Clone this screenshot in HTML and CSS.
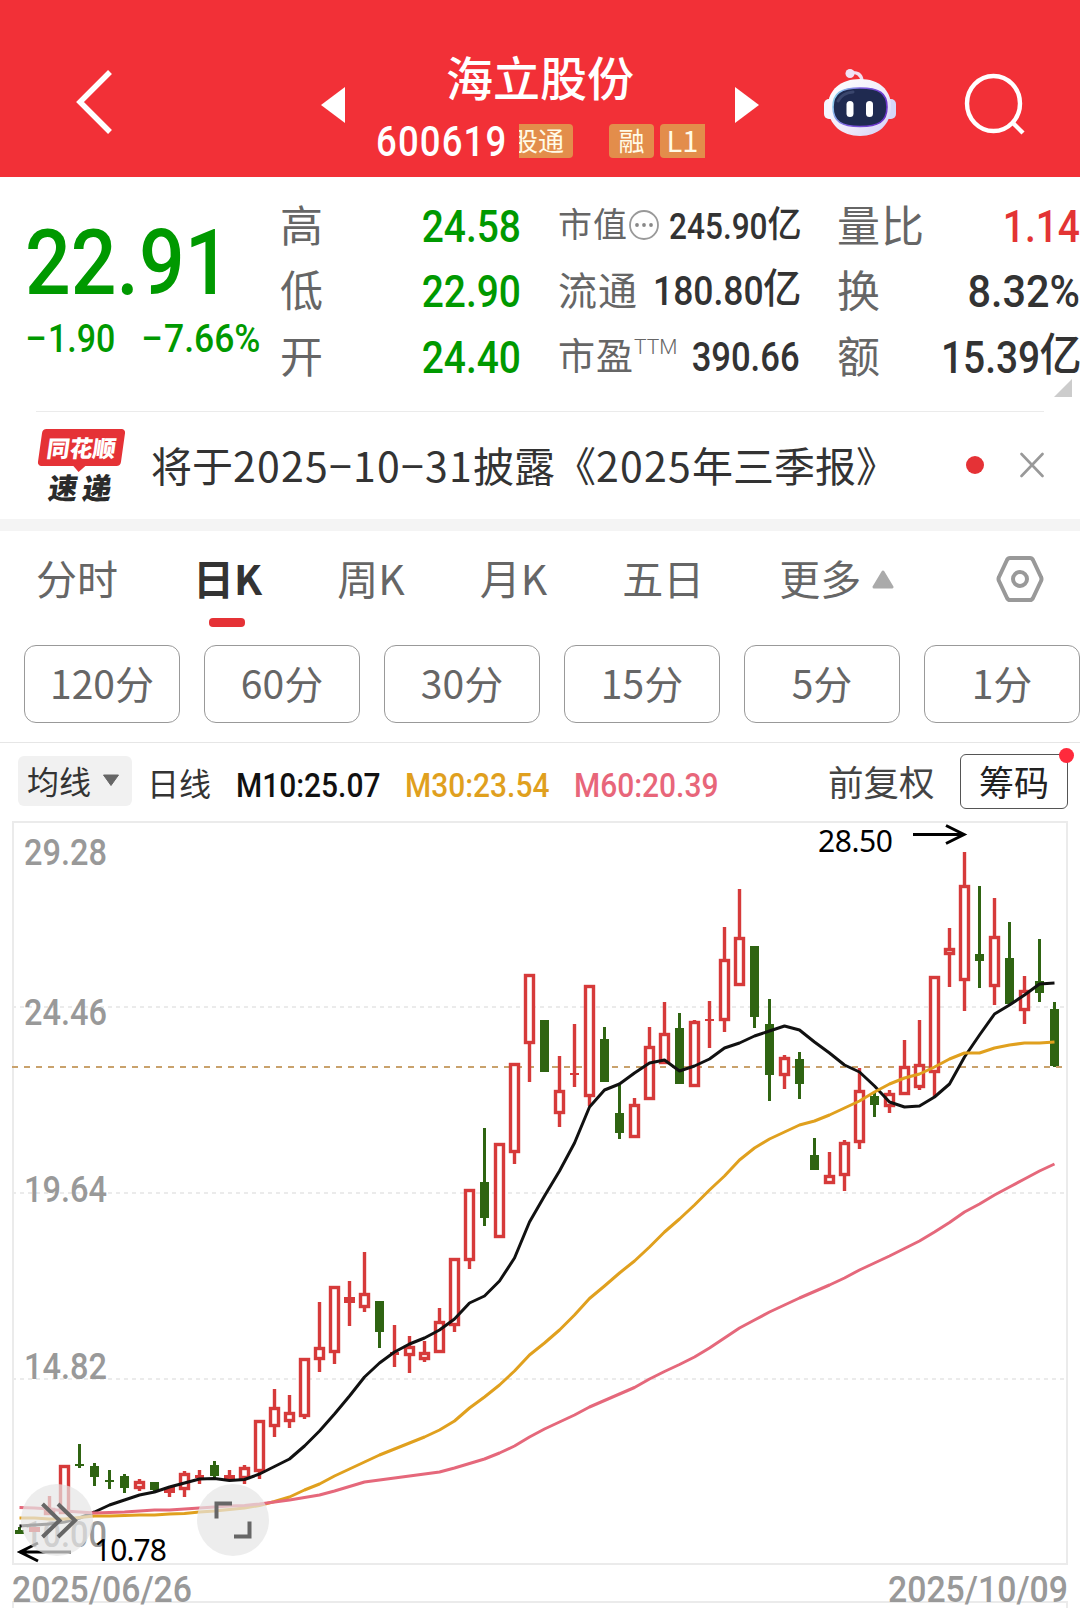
FILE: index.html
```html
<!DOCTYPE html>
<html lang="zh-CN">
<head>
  <meta charset="UTF-8" />
  <title>海立股份 600619</title>
  <meta name="viewport" content="width=device-width, initial-scale=1" />
  <link rel="stylesheet" href="styles.css">
</head>
<body>

  <header class="header">
    <svg class="back" width="40" height="68" viewBox="0 0 40 68"><path d="M35 4 L5 34 L35 64" fill="none" stroke="#fff" stroke-width="5.5" /></svg>
    <svg class="prev" width="24" height="36" viewBox="0 0 24 36"><path d="M24 0 V36 L0 18 Z" fill="#fff" /></svg>
    <div class="stock">
      <h1>海立股份</h1>
      <div class="stock-sub">
        <span class="code">600619</span>
        <span class="tag tag-cut"><span>股通</span></span>
        <span class="tag">融</span>
        <span class="tag tag-last">L1</span>
      </div>
    </div>
    <svg class="next" width="24" height="36" viewBox="0 0 24 36"><path d="M0 0 V36 L24 18 Z" fill="#fff" /></svg>
    <svg class="robot" width="74" height="70" viewBox="0 0 74 70">
      <defs>
        <linearGradient id="shell" x1="0" y1="0" x2="1" y2="1">
          <stop offset="0" stop-color="#ffffff" />
          <stop offset="0.6" stop-color="#f0eafa" />
          <stop offset="1" stop-color="#cfcdf6" />
        </linearGradient>
        <linearGradient id="rim" x1="0" y1="0" x2="1" y2="0.3">
          <stop offset="0" stop-color="#8fe6ee" />
          <stop offset="0.5" stop-color="#7f5ce0" />
          <stop offset="1" stop-color="#6a35c8" />
        </linearGradient>
      </defs>
      <path d="M27 5 Q38 3 39 13" fill="none" stroke="#f3dff0" stroke-width="3.4" />
      <circle cx="27" cy="5.500" r="4.500" fill="#f1e2f6" />
      <rect x="1" y="31" width="12" height="20" rx="5" fill="#f4f6ff" />
      <rect x="61" y="31" width="12" height="20" rx="5" fill="#d6d6f8" />
      <path d="M37 11 C56 11 68 22 68 38 C68 57 55 68 37 68 C19 68 5 57 5 38 C5 22 18 11 37 11 Z" fill="url(#shell)" />
      <path d="M37 20 C56 20 64 25 64 39 C64 54 55 58.500 37 58.500 C19 58.500 10 54 10 39 C10 25 18 20 37 20 Z" fill="#1f2a50" stroke="url(#rim)" stroke-width="1.600" />
      <path d="M15 33 Q19 25 30 24" fill="none" stroke="#55618a" stroke-width="3" stroke-linecap="round" opacity="0.5" />
      <rect x="23.500" y="33" width="7" height="16" rx="3.500" fill="#fff" />
      <rect x="43" y="33" width="7" height="16" rx="3.500" fill="#fff" />
    </svg>
    <svg class="search" width="64" height="64" viewBox="0 0 64 64" fill="none" stroke="#fff" stroke-width="4.400">
      <ellipse cx="30.500" cy="31.500" rx="26.500" ry="27.500" /><path d="M49 50 L60 61" />
    </svg>
  </header>

  <section class="quote">
    <div class="price-box">
      <div class="price">22.91</div>
      <div class="change"><span class="minus">−</span><span class="chg-a">1.90</span><span class="minus second">−</span><span class="chg-b">7.66%</span></div>
    </div>
    <div class="col col-a">
      <div class="row"><span>高</span><b class="green">24.58</b></div>
      <div class="row"><span>低</span><b class="green">22.90</b></div>
      <div class="row"><span>开</span><b class="green">24.40</b></div>
    </div>
    <div class="col col-b">
      <div class="row s1"><span>市值</span>
        <svg class="more-info" width="32" height="32" viewBox="0 0 32 32"><circle cx="16" cy="16" r="14" fill="none" stroke="#999" stroke-width="1.800" /><circle cx="9" cy="16" r="1.900" fill="#888" /><circle cx="16" cy="16" r="1.900" fill="#888" /><circle cx="23" cy="16" r="1.900" fill="#888" /></svg>
        <b>245.90<i>亿</i></b></div>
      <div class="row s2"><span>流通</span><b>180.80<i>亿</i></b></div>
      <div class="row s3"><span>市盈</span><span class="ttm">TTM</span><b>390.66</b></div>
    </div>
    <div class="col col-c">
      <div class="row"><span>量比</span><b class="red">1.14</b></div>
      <div class="row"><span>换</span><b class="wide">8.32%</b></div>
      <div class="row"><span>额</span><b>15.39<i>亿</i></b></div>
    </div>
    <div class="corner"></div>
  </section>

  <section class="notice">
    <div class="express">
      <div class="express-top"><span>同花顺</span></div>
      <div class="express-bottom">速递</div>
    </div>
    <p>将于<span class="date">2025−10−31</span>披露《<span class="date">2025</span>年三季报》</p>
    <span class="dot"></span>
    <svg class="close" width="24" height="26" viewBox="0 0 24 26"><path d="M1.500 2 L22.500 24 M22.500 2 L1.500 24" stroke="#999" stroke-width="2.600" stroke-linecap="round" /></svg>
  </section>

  <nav class="tabs">
    <a>分时</a>
    <a class="active">日K</a>
    <a>周K</a>
    <a>月K</a>
    <a>五日</a>
    <a>更多</a>
    <svg class="up" width="22" height="19" viewBox="0 0 22 19"><path d="M11 2 L20 17 H2 Z" fill="#aaa" stroke="#aaa" stroke-width="3" stroke-linejoin="round" /></svg>
    <svg class="setting" width="50" height="50" viewBox="0 0 50 50" fill="none" stroke="#999" stroke-linejoin="round">
      <path d="M15 4 H35 Q37 4 38 6 L46 23 Q47 25 46 27 L38 44 Q37 46 35 46 H15 Q13 46 12 44 L4 27 Q3 25 4 23 L12 6 Q13 4 15 4 Z" stroke-width="4" />
      <circle cx="25" cy="25" r="7" stroke-width="4" />
    </svg>
  </nav>

  <div class="periods">
    <button>120分</button>
    <button>60分</button>
    <button>30分</button>
    <button>15分</button>
    <button>5分</button>
    <button>1分</button>
  </div>

  <div class="indicators">
    <div class="ma-select">均线<svg width="18" height="13" viewBox="0 0 18 13"><path d="M1.500 1 H16.500 L9 11.500 Z" fill="#666" stroke="#666" stroke-linejoin="round" /></svg></div>
    <span class="line-name">日线</span>
    <span class="ma m10">M10:25.07</span>
    <span class="ma m30">M30:23.54</span>
    <span class="ma m60">M60:20.39</span>
    <span class="adjust">前复权</span>
    <div class="chips">筹码</div>
  </div>

  <svg class="chart" width="1080" height="795" viewBox="0 813 1080 795">
    <g fill="none" stroke="#ebebeb" stroke-width="2">
      <rect x="13" y="822" width="1054" height="742" />
      <path d="M13 1608 V1602 H1067 V1608" />
      <path d="M12 1007 H1067 M12 1193 H1067 M12 1379 H1067" stroke-dasharray="4 4" />
    </g>
    <path d="M12 1067 H1062" stroke="#c9a26c" stroke-width="1.800" stroke-dasharray="6 6" />
    <g class="axis">
      <text x="24" y="864.500" textLength="83" lengthAdjust="spacingAndGlyphs">29.28</text>
      <text x="24" y="1024.500" textLength="83" lengthAdjust="spacingAndGlyphs">24.46</text>
      <text x="24" y="1201.500" textLength="83" lengthAdjust="spacingAndGlyphs">19.64</text>
      <text x="24" y="1378.500" textLength="83" lengthAdjust="spacingAndGlyphs">14.82</text>
      <text x="24" y="1547" textLength="83" lengthAdjust="spacingAndGlyphs">10.00</text>
      <text x="12" y="1602" textLength="180" lengthAdjust="spacingAndGlyphs">2025/06/26</text>
      <text x="888" y="1602" textLength="180" lengthAdjust="spacingAndGlyphs">2025/10/09</text>
    </g>
    <g id="candles"></g>
    <g id="lines"></g>
    <g class="extreme">
      <text x="818" y="852" textLength="75">28.50</text>
      <text x="94" y="1560.500" textLength="73">10.78</text>
      <path d="M913 834.500 H964 M946 825.500 L964 834.500 L946 843.500" />
      <path d="M71 1552 H20 M38 1543 L20 1552 L38 1561" />
    </g>
    <g class="float-btn">
      <circle cx="57" cy="1520" r="36" />
      <path d="M42.500 1504 L59.500 1520.500 L42.500 1537 M58 1504 L75 1520.500 L58 1537" />
      <circle cx="233" cy="1520" r="36" />
      <path d="M216.500 1518.500 V1503.500 H232 M249.500 1521.500 V1536.500 H234" />
    </g>
  </svg>

  <script src="chart.js"></script>
</body>
</html>
```
FILE: styles.css
```css
* { box-sizing: border-box; }
html, body { margin: 0; padding: 0; }
body {
  width: 1080px; height: 1608px;
  overflow: hidden;
  background: #fff; color: #333;
  font-family: "Noto Sans CJK SC", sans-serif;
}
svg { display: block; flex: none; }
i { font-style: normal; }

/* header */
.header {
  display: flex; align-items: flex-start;
  height: 177px; background: #f23037; color: #fff;
}
.back { margin: 68px 0 0 75px; }
.prev { margin: 87px 0 0 206px; }
.stock { width: 330px; margin: 41px 0 0 31px; }
.stock h1 {
  margin: 0 0 0 70px; font-size: 47px;
  font-weight: 500; line-height: 70px; height: 80px;
}
.stock-sub { display: flex; align-items: center; height: 40px; }
.code {
  width: 143px; font: 500 43px/40px Roboto, sans-serif;
  transform: scaleX(0.85); transform-origin: left;
  letter-spacing: 1.3px; white-space: nowrap;
}
.tag {
  width: 45px; height: 34px; margin-right: 6px;
  background: #e38d4b; border-radius: 4px;
  font-size: 26px; line-height: 31px; text-align: center;
  color: #fffbe8;
}
.tag-cut {
  display: flex; justify-content: flex-end;
  width: 54px; margin-right: 36px; padding-right: 9px;
  border-radius: 0 4px 4px 0; overflow: hidden;
}
.tag-cut span { flex: none; white-space: nowrap; }
.tag-last { border-radius: 4px 0 0 4px; margin-right: 0; font-size: 29px; }
.next { margin: 87px 0 0 29px; }
.robot { margin: 68px 0 0 64px; }
.search { margin: 72px 0 0 66px; }

/* quote */
.quote {
  display: flex; position: relative;
  height: 234px; padding-top: 15px;
}
.quote::after {
  content: ""; position: absolute;
  left: 36px; right: 36px; bottom: -1px;
  height: 1px; background: #ebebeb;
}
.price-box { width: 281px; padding-left: 25px; color: #090; }
.price {
  margin-top: 21px; width: 220px;
  font: 500 91px/100px Roboto, sans-serif;
  transform: scaleX(0.885); transform-origin: left;
}
.change {
  display: flex; margin-top: 2px;
  font: 500 39px/48px Roboto, sans-serif;
}
.minus { width: 23px; }
.second { margin-left: 31px; }
.chg-a, .chg-b { width: 62px; transform: scaleX(0.87); transform-origin: left; }
.chg-b { transform: scaleX(0.91); }
.col { display: flex; flex-direction: column; color: #666; }
.col-a { width: 241px; margin-right: 37px; margin-left: -1px; }
.col-b { width: 242px; margin-right: 37px; }
.col-c { width: 243px; }
.row { display: flex; align-items: center; height: 65.5px; white-space: nowrap; font-size: 43px; }
.row span { line-height: 62px; margin-top: -4px; letter-spacing: 1px; }
.row b {
  display: flex; justify-content: flex-end;
  flex: 1; min-width: 0; color: #333;
  font: 500 45px/65px Roboto, "Noto Sans CJK SC", sans-serif;
  padding-top: 3px;
  transform: scaleX(0.865); transform-origin: right;
}
.row b.green { color: #090; }
.row b.red { color: #e33434; }
.row b.wide { transform: scaleX(0.92); }
.row b i { margin-left: 1px; margin-top: -2px; transform: scaleX(1.08); }
.row.s1 { font-size: 34px; } .s1 b { font-size: 36.500px; }
.row.s2 { font-size: 39px; } .s2 b { font-size: 41px; }
.row.s3 { font-size: 37px; } .s3 b { font-size: 40px; }
.row .ttm { font: 300 21px/30px Roboto, sans-serif; margin-top: -17px; letter-spacing: 0; }
.corner {
  position: absolute; right: 8px; bottom: 14px;
  border-left: 18px solid transparent; border-bottom: 18px solid #ccc;
}

/* notice */
.notice {
  display: flex; align-items: center; position: relative;
  height: 120px; border-bottom: 12px solid #f4f4f4;
}
.express { width: 83px; height: 72px; margin-left: 40px; }
.express-top {
  position: relative; height: 37px;
  background: #e53236; border-radius: 4px;
  transform: skewX(-8deg);
  color: #fff; font-size: 23px; font-weight: 900;
  line-height: 36px; text-align: center;
}
.express-top::after {
  content: ""; position: absolute; left: 36px; top: 37px;
  border: 6px solid transparent; border-top-color: #e53236; border-bottom: 0;
}
.express-bottom {
  font-size: 29px; font-weight: 900; line-height: 34px; height: 34px;
  margin-top: 3px;
  letter-spacing: 5px; padding-left: 9px; color: #2b2b2b;
  transform: skewX(-8deg);
}
.notice p { width: 812px; margin: -3px 0 0 28px; font-size: 41px; line-height: 60px; white-space: nowrap; }
.date { letter-spacing: 1.25px; }
.dot { width: 18px; height: 18px; border-radius: 50%; background: #e53236; margin-left: 3px; }
.close { margin-left: 36px; }

/* tabs */
.tabs { display: flex; align-items: center; height: 98px; padding: 0 0 2px 36px; color: #666; font-size: 41px; }
.tabs a { position: relative; line-height: 60px; white-space: nowrap; margin-top: -4px; }
.tabs a + a { margin-left: 75px; }
.tabs .active { color: #333; font-weight: 700; }
.tabs .active::after {
  content: ""; position: absolute; left: 16px; top: 71px;
  width: 36px; height: 9px; border-radius: 4px; background: #e53236;
}
.up { margin-left: 11px; }
.setting { margin-left: 101px; }

/* period buttons */
.periods { display: flex; gap: 24px; height: 113px; padding: 16px 0 0 24px; }
.periods button {
  flex: none; width: 156px; height: 78px; padding: 0 0 4px;
  background: #fff; border: 1px solid #999; border-radius: 12px;
  font: 39px "Noto Sans CJK SC", sans-serif; color: #666;
}

/* moving average row */
.indicators {
  display: flex; align-items: flex-start; height: 71px;
  border-top: 1px solid #e6e6e6;
  white-space: nowrap; font-size: 32px; line-height: 50px;
}
.ma-select {
  display: flex; align-items: center;
  width: 114px; height: 50px; margin: 13px 0 0 18px; padding: 0 0 2px 9px;
  background: #f1f1f1; border-radius: 6px;
}
.ma-select svg { margin-left: 11px; }
.line-name { margin: 14px 0 0 15px; width: 89px; }
.ma {
  width: 169px; margin-top: 17px; font: 500 34px/50px Roboto, sans-serif;
  transform: scaleX(0.88); transform-origin: left;
}
.m10 { color: #111; }
.m30 { color: #e0a01e; }
.m60 { color: #e8667a; }
.adjust { width: 132px; margin: 13px 0 0 85px; font-size: 35.5px; color: #444; }
.chips {
  position: relative; flex: none; width: 108px; height: 55px; margin-top: 11px;
  border: 1px solid #555; border-radius: 6px;
  font-size: 35px; line-height: 52px; text-align: center; color: #222;
}
.chips::after {
  content: ""; position: absolute; right: -7px; top: -7px;
  width: 15px; height: 15px; border-radius: 50%; background: #ff2a3c;
}

/* chart */
.axis { font: 500 36px Roboto, sans-serif; fill: #999; }
.extreme { font: 400 30px "Noto Sans", sans-serif; fill: #000; }
.extreme path { fill: none; stroke: #000; stroke-width: 3; }
.float-btn circle { fill: #e6e6e6; opacity: 0.7; }
.float-btn path { fill: none; stroke: #666; stroke-width: 4; }
#lines path { fill: none; stroke-width: 3; stroke-linejoin: round; }
```
FILE: chart.js
```javascript
// one entry per day: colour, high, body top, body bottom, low (chart units)
const days = [
  ["g",1527,1530,1534,1534],["r",1527,1527,1532,1532],["r",1496,1508,1515,1515],["r",1465,1465,1514,1514],
  ["g",1444,1464,1466,1468],["g",1463,1466,1477,1486],["g",1470,1480,1482,1489],["g",1474,1476,1488,1493],
  ["r",1479,1481,1489,1491],["g",1482,1482,1490,1491],["r",1487,1487,1493,1497],["r",1471,1473,1490,1497],
  ["r",1470,1475,1478,1484],["g",1461,1465,1476,1478],["r",1470,1475,1480,1480],["r",1465,1467,1479,1484],
  ["r",1420,1420,1472,1479],["r",1389,1407,1427,1437],["r",1395,1412,1422,1428],["r",1358,1358,1417,1419],
  ["r",1302,1347,1360,1372],["r",1286,1286,1353,1364],["r",1281,1297,1303,1326],["r",1252,1293,1308,1312],
  ["g",1301,1301,1332,1348],["r",1325,1352,1355,1367],["r",1336,1346,1356,1373],["r",1341,1352,1360,1362],
  ["r",1308,1321,1353,1353],["r",1258,1258,1326,1332],["r",1189,1189,1261,1269],["g",1128,1182,1218,1226],
  ["r",1143,1143,1238,1238],["r",1063,1063,1153,1164],["r",974,974,1044,1082],["g",1020,1020,1072,1072],
  ["r",1056,1090,1114,1127],["r",1024,1073,1075,1087],["r",985,985,1097,1106],["g",1027,1039,1082,1082],
  ["g",1085,1113,1133,1139],["r",1098,1104,1138,1138],["r",1027,1046,1100,1100],["r",1002,1033,1064,1064],
  ["g",1013,1028,1084,1084],["r",1020,1021,1087,1087],["r",1001,1019,1021,1048],["r",927,959,1021,1032],
  ["r",889,937,986,986],["g",946,946,1017,1028],["g",999,1024,1075,1101],["r",1055,1057,1076,1089],
  ["g",1052,1059,1084,1099],["g",1138,1155,1170,1170],["r",1152,1175,1184,1184],["r",1140,1142,1176,1191],
  ["r",1068,1090,1143,1149],["g",1092,1096,1105,1117],["r",1090,1093,1107,1113],["r",1040,1066,1095,1095],
  ["r",1020,1064,1088,1090],["r",976,976,1073,1097],["r",928,948,955,987],["r",852,885,981,1011],
  ["g",886,954,961,988],["r",898,936,987,1005],["g",922,958,1004,1004],["r",976,990,1011,1024],
  ["g",939,981,993,1002],["g",1002,1009,1066,1067]
];

const m10 = [1526,1525,1524,1522,1518,1512,1505,1500,1495,1492,1487,1483,1479,1478.5,1480.5,1479.5,1474,1466.5,1459,1446,1431,1414,1396,1377,1363,1352,1344,1338,1330,1319,1303,1296,1281,1258,1222,1196,1171,1143,1107,1090,1084,1073,1063,1060,1071,1066,1059,1048,1043,1036,1031,1026,1030,1042,1053,1065,1072,1086,1102,1107,1106,1097,1084,1057,1035,1014,1005,995,984,983];
const m30 = [1518,1518,1519,1519,1517.5,1516,1516,1515.5,1515,1515,1514,1513.5,1512,1511,1509.5,1508,1505.5,1501.5,1497,1490,1484,1476,1469,1462,1455,1449,1443,1437,1430,1421,1408,1397,1385,1371,1355,1343,1330,1315,1298.5,1286,1273,1261,1247,1232,1219,1205,1190,1176,1160,1148,1139,1132,1125,1121,1115,1108,1101,1092,1084,1078,1074,1067,1059,1053,1053,1048,1045,1043,1043,1042];
const m60 = [1507.5,1508,1509,1511,1512,1513,1512.5,1512,1511,1510,1510,1509,1508,1507,1506,1505.5,1504,1502,1500,1497.5,1495,1491,1486.5,1482,1480,1478,1476,1474,1472,1468,1463.5,1459,1453,1446,1437,1429,1422,1415,1407,1400.5,1394,1387.5,1379,1371.5,1364.5,1357,1348,1338,1328,1320,1312,1305,1298,1291.5,1285,1278,1270,1263,1256,1248.5,1241,1232,1222.5,1212,1204,1195,1187,1179,1171,1164];

const x = i => 19.5 + i * 15;

document.getElementById("candles").innerHTML = days.map(([c, hi, top, bot, lo], i) => {
  if (c === "g") {
    return `<path d="M${x(i) - 1.5} ${hi}h3V${lo}h-3Z M${x(i) - 4.5} ${top}h9V${bot}h-9Z" fill="#2f6412"/>`;
  }
  const wick = `<path d="M${x(i)} ${hi}V${top} M${x(i)} ${bot}V${lo}" stroke="#d63a3a" stroke-width="3.4"/>`;
  if (bot - top < 7) {
    const w = bot - top < 4 ? 9 : 11;
    return wick + `<rect x="${x(i) - w / 2}" y="${top}" width="${w}" height="${bot - top}" fill="#d63a3a"/>`;
  }
  return wick + `<rect x="${x(i) - 4}" y="${top + 1.5}" width="8" height="${bot - top - 3}" fill="#fff" stroke="#d63a3a" stroke-width="3.4"/>`;
}).join("");

const line = (ys, color) => `<path d="M${ys.map((y, i) => x(i) + " " + y).join("L")}" stroke="${color}"/>`;
document.getElementById("lines").innerHTML = line(m10, "#111") + line(m30, "#e0a01e") + line(m60, "#e5687b");
```
